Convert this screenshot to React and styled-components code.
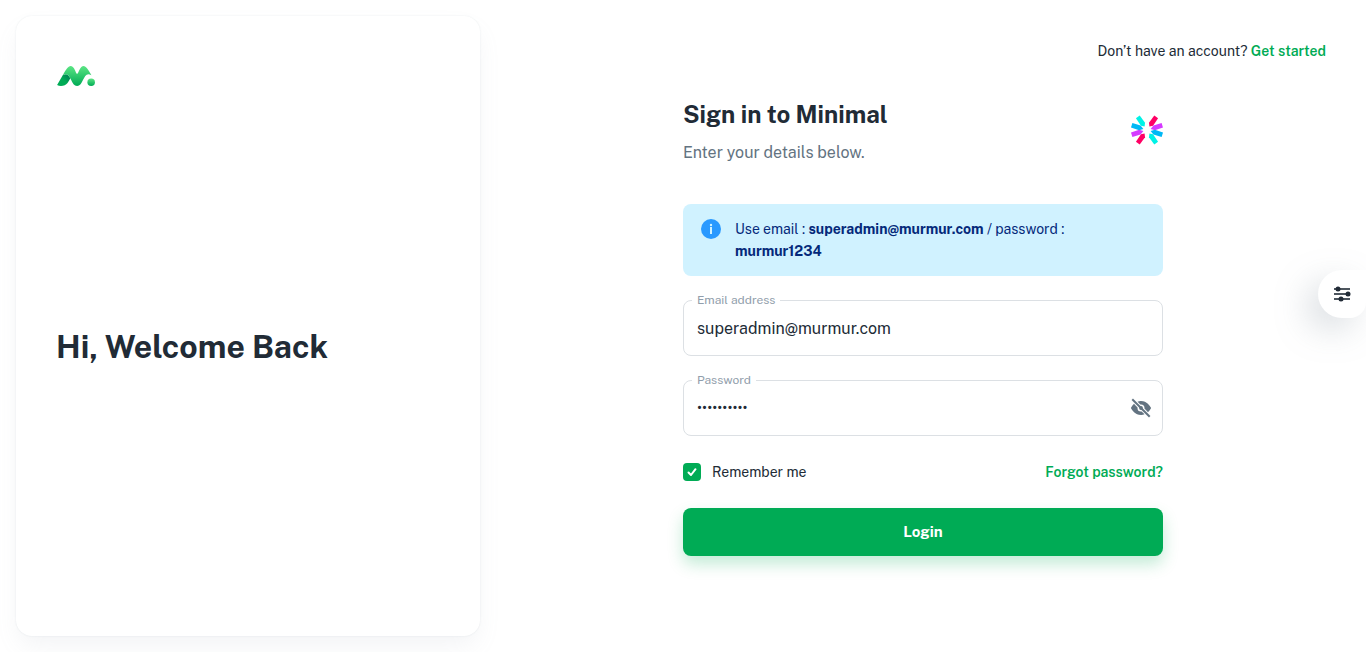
import React, { useState } from 'react';
import styled, { createGlobalStyle } from 'styled-components';

const GlobalStyle = createGlobalStyle`
  *, *::before, *::after { box-sizing: border-box; }
  body {
    margin: 0;
    background: #fff;
    color: #212b36;
    font-family: 'Public Sans', Inter, 'Liberation Sans', sans-serif;
    font-size: 14px;
    line-height: 22px;
  }
  h1, h2, p { margin: 0; }
  button, input { font: inherit; color: inherit; }
`;

const Page = styled.div`
  display: flex;
  min-height: 100vh;
`;

const WelcomeCard = styled.aside`
  display: flex;
  flex-direction: column;
  width: 100%;
  max-width: 464px;
  margin: 16px 0 16px 16px;
  padding: 40px;
  border-radius: 16px;
  background: #fff;
  box-shadow: 0 0 2px 0 rgba(145, 158, 171, 0.2), 0 12px 24px -4px rgba(145, 158, 171, 0.12);
`;

const LogoLink = styled.a`
  display: block;
  height: 42px;
`;

const WelcomeTitle = styled.h2`
  margin: auto 0;
  font-size: 32px;
  line-height: 48px;
  font-weight: 700;
`;

const Content = styled.main`
  position: relative;
  flex: 1;
  display: flex;
  flex-direction: column;
  align-items: center;
  padding: 40px 40px 96px;
`;

const AccountHint = styled.p`
  align-self: flex-end;
  margin-bottom: 34px;
`;

const TextLink = styled.a`
  color: #00ab55;
  font-weight: 600;
  text-decoration: none;
`;

const Form = styled.form`
  display: flex;
  flex-direction: column;
  gap: 24px;
  width: 100%;
  max-width: 480px;
`;

const FormHeader = styled.header`
  display: flex;
  align-items: center;
  justify-content: space-between;
  margin-bottom: 15px;
`;

const Title = styled.h1`
  margin-bottom: 9px;
  font-size: 24px;
  line-height: 36px;
  font-weight: 700;
`;

const Subtitle = styled.p`
  color: #637381;
  font-size: 16px;
  line-height: 24px;
`;

const InfoAlert = styled.div`
  display: flex;
  gap: 12px;
  padding: 14px 16px;
  border-radius: 8px;
  background: #d0f2ff;
  color: #04297a;

  svg { flex: none; }
`;

const Field = styled.div`
  position: relative;
  display: flex;
  align-items: center;
  height: 56px;
  padding: 0 9px 0 13px;
  border: 1px solid #dce0e4;
  border-radius: 8px;
`;

const FieldLabel = styled.label`
  position: absolute;
  top: -10px;
  left: 8px;
  padding: 0 5px;
  background: #fff;
  color: #919eab;
  font-size: 12px;
  line-height: 18px;
`;

const FieldInput = styled.input`
  flex: 1;
  min-width: 0;
  padding: 2px 0 0;
  border: 0;
  outline: 0;
  background: transparent;
  font-size: 16px;
  line-height: 24px;
`;

const IconButton = styled.button`
  display: flex;
  padding: 0;
  border: 0;
  background: none;
  color: #637381;
  cursor: pointer;
`;

const OptionsRow = styled.div`
  display: flex;
  align-items: center;
  justify-content: space-between;
  height: 24px;
`;

const RememberLabel = styled.label`
  display: flex;
  align-items: center;
  gap: 11px;
`;

const Checkbox = styled.input`
  appearance: none;
  width: 18px;
  height: 18px;
  margin: 0;
  border: 2px solid #637381;
  border-radius: 4px;

  &:checked {
    border: 0;
    background: #00ab55;
  }
`;

const CheckHolder = styled.span`
  position: relative;
  display: flex;

  svg {
    position: absolute;
    inset: 0;
    pointer-events: none;
  }
`;

const LoginButton = styled.button`
  height: 48px;
  border: 0;
  border-radius: 8px;
  background: #00ab55;
  color: #fff;
  font-size: 15px;
  line-height: 26px;
  font-weight: 700;
  box-shadow: 0 8px 16px 0 rgba(0, 171, 85, 0.24);
  cursor: pointer;
`;

const SettingsButton = styled.button`
  position: fixed;
  top: calc(50% - 56px);
  right: 0;
  display: flex;
  align-items: center;
  justify-content: center;
  width: 48px;
  height: 48px;
  padding: 0;
  border: 0;
  border-radius: 24px 0 16px 24px;
  background: #fff;
  box-shadow: -12px 12px 36px -4px rgba(120, 134, 148, 0.36);
  cursor: pointer;
`;

const Logo = () => (
  <svg width="40" height="40" viewBox="0 0 512 512" aria-hidden="true">
    <defs>
      <linearGradient id="leaf" x1="100%" x2="50%" y1="10%" y2="50%">
        <stop offset="0%" stopColor="#007b55" />
        <stop offset="100%" stopColor="#00ab55" />
      </linearGradient>
      <linearGradient id="wave" x1="50%" x2="50%" y1="0%" y2="100%">
        <stop offset="0%" stopColor="#5be584" />
        <stop offset="100%" stopColor="#00ab55" />
      </linearGradient>
    </defs>
    <path
      fill="url(#leaf)"
      d="M183.168 285.573l-2.918 5.298-2.973 5.363-2.846 5.095-2.274 4.043-2.186 3.857-2.506 4.383-1.6 2.774-2.294 3.939-1.099 1.869-1.416 2.388-1.025 1.713-1.317 2.18-.95 1.558-1.514 2.447-.866 1.38-.833 1.312-.802 1.246-.77 1.18-.739 1.111-.935 1.38-.664.956-.425.6-.41.572-.59.8-.376.497-.537.69-.171.214c-10.76 13.37-22.496 23.493-36.93 29.334-30.346 14.262-68.07 14.929-97.202-2.704l72.347-124.682 2.8-1.72c49.257-29.326 73.08 1.117 94.02 40.927z"
    />
    <path
      fill="url(#wave)"
      d="M444.31 229.726c-46.27-80.956-94.1-157.228-149.043-45.344-7.516 14.384-12.995 42.337-25.267 42.337v-.142c-12.272 0-17.764-27.953-25.268-42.337C189.79 72.356 141.96 148.628 95.69 229.584c-3.483 6.106-6.828 11.932-9.69 16.996 106.038-67.127 97.11 135.667 184 137.278V384c86.891-1.611 77.962-204.405 184-137.28-2.87-5.064-6.206-10.89-9.69-16.994"
    />
    <circle cx="450" cy="336" r="48" fill="url(#wave)" />
  </svg>
);

const STEEP = 'M4.2 0L7 -2.5L16 -2.3V2.3L7 2.5Z';
const FLAT = 'M3.8 0L7.5 -2.5L16 -2.4V2.4L7.5 2.5Z';

const PETALS = [
  [-55, '#ff0064', STEEP],
  [-17, '#d53aff', FLAT],
  [17, '#00b8f5', FLAT],
  [55, '#00f2e6', STEEP],
  [125, '#ff0064', STEEP],
  [163, '#d53aff', FLAT],
  [197, '#00b8f5', FLAT],
  [235, '#00f2e6', STEEP],
];

const AuthLogo = () => (
  <svg width="32" height="32" viewBox="-16 -15 32 32" aria-hidden="true">
    {PETALS.map(([angle, fill, shape]) => (
      <path key={angle} transform={`rotate(${angle})`} fill={fill} d={shape} />
    ))}
  </svg>
);

const InfoIcon = () => (
  <svg width="24" height="24" viewBox="0 0 24 24" aria-hidden="true">
    <circle cx="12" cy="11" r="10" fill="#2999ff" />
    <circle cx="12" cy="7" r="1.2" fill="#d0f2ff" />
    <rect x="11" y="9" width="2" height="7" fill="#d0f2ff" />
  </svg>
);

const EyeOffIcon = () => (
  <svg width="24" height="24" viewBox="0 0 24 24" fill="currentColor" aria-hidden="true">
    <circle cx="12" cy="12" r="1.9" />
    <path d="M15.29 18.12L14 16.78l-.07-.07l-1.27-1.27a4.07 4.07 0 0 1-.61.06A3.5 3.5 0 0 1 8.5 12a4.07 4.07 0 0 1 .06-.61l-2-2L5 7.87a15.89 15.89 0 0 0-2.87 3.63a1 1 0 0 0 0 1c.63 1.09 4 6.5 9.89 6.5h.25a9.48 9.48 0 0 0 3.23-.67zM8.59 5.76l2.8 2.8A4.07 4.07 0 0 1 12 8.5a3.5 3.5 0 0 1 3.5 3.5a4.07 4.07 0 0 1-.06.61l2.68 2.68l.84.84a15.89 15.89 0 0 0 2.91-3.63a1 1 0 0 0 0-1c-.64-1.11-4.16-6.68-10.14-6.5a9.48 9.48 0 0 0-3.23.67z" />
    <path d="M4 4L20 20" stroke="currentColor" strokeWidth="2" strokeLinecap="square" />
  </svg>
);

const CheckIcon = () => (
  <svg width="18" height="18" viewBox="0 0 18 18" fill="none" stroke="#fff" strokeWidth="2" strokeLinecap="round" strokeLinejoin="round" aria-hidden="true">
    <path d="M5.5 9.5L8 12L12.5 6.2" />
  </svg>
);

const SlidersIcon = () => (
  <svg width="24" height="24" viewBox="0 0 24 24" aria-hidden="true">
    <path d="M4 7h16M4 12h16M4 17h16" stroke="#212b36" strokeOpacity="0.8" strokeWidth="1.8" />
    <g fill="#212b36">
      <circle cx="8" cy="7" r="2.5" />
      <circle cx="18" cy="12" r="2.5" />
      <circle cx="11" cy="17" r="2.5" />
    </g>
  </svg>
);

export default function App() {
  const [email, setEmail] = useState('superadmin@murmur.com');
  const [password, setPassword] = useState('murmur1234');
  const [visible, setVisible] = useState(false);
  const [remember, setRemember] = useState(true);

  return (
    <>
      <GlobalStyle />
      <Page>
        <WelcomeCard>
          <LogoLink href="#" aria-label="Home">
            <Logo />
          </LogoLink>
          <WelcomeTitle>Hi, Welcome Back</WelcomeTitle>
        </WelcomeCard>

        <Content>
          <AccountHint>
            Don’t have an account? <TextLink href="#">Get started</TextLink>
          </AccountHint>

          <Form onSubmit={(event) => event.preventDefault()}>
            <FormHeader>
              <div>
                <Title>Sign in to Minimal</Title>
                <Subtitle>Enter your details below.</Subtitle>
              </div>
              <AuthLogo />
            </FormHeader>

            <InfoAlert>
              <InfoIcon />
              <p>
                Use email : <strong>superadmin@murmur.com</strong> / password : <strong>murmur1234</strong>
              </p>
            </InfoAlert>

            <Field>
              <FieldLabel htmlFor="email">Email address</FieldLabel>
              <FieldInput id="email" type="email" value={email} onChange={(event) => setEmail(event.target.value)} />
            </Field>

            <Field>
              <FieldLabel htmlFor="password">Password</FieldLabel>
              <FieldInput
                id="password"
                type={visible ? 'text' : 'password'}
                value={password}
                onChange={(event) => setPassword(event.target.value)}
              />
              <IconButton type="button" aria-label="Toggle password visibility" onClick={() => setVisible(!visible)}>
                <EyeOffIcon />
              </IconButton>
            </Field>

            <OptionsRow>
              <RememberLabel>
                <CheckHolder>
                  <Checkbox type="checkbox" checked={remember} onChange={(event) => setRemember(event.target.checked)} />
                  {remember && <CheckIcon />}
                </CheckHolder>
                Remember me
              </RememberLabel>
              <TextLink href="#">Forgot password?</TextLink>
            </OptionsRow>

            <LoginButton type="submit">Login</LoginButton>
          </Form>
        </Content>
      </Page>
      <SettingsButton type="button" aria-label="Open settings">
        <SlidersIcon />
      </SettingsButton>
    </>
  );
}
